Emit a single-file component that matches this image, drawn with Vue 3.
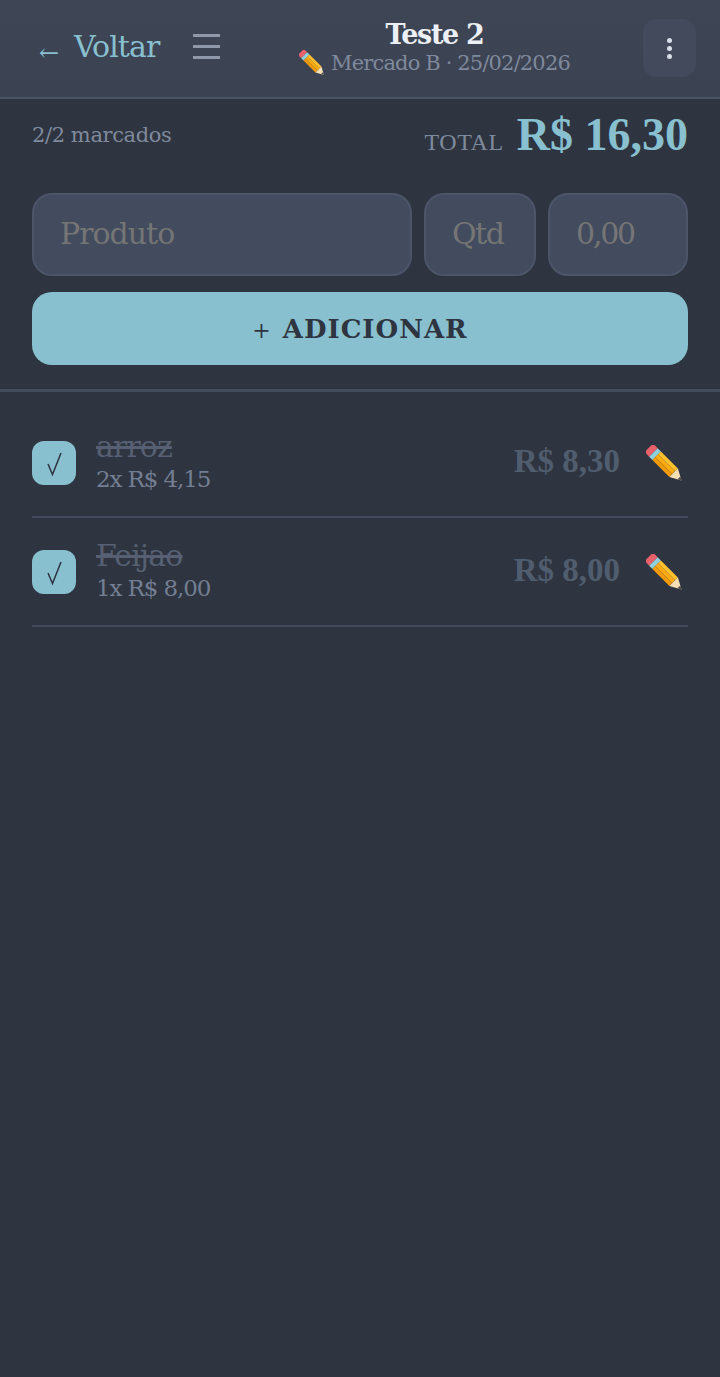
<script setup>
const items = [
  { name: 'arroz', detail: '2x R$ 4,15', price: 'R$ 8,30' },
  { name: 'Feijao', detail: '1x R$ 8,00', price: 'R$ 8,00' }
]
</script>

<template>
  <div class="page">
    <svg width="0" height="0" class="defs">
      <symbol id="pencil" viewBox="0 0 40 40">
        <g transform="rotate(45 20 20)">
          <path d="M-4 17a3.5 3.5 0 0 1 3.500-3.500H3v13H-.5A3.500 3.500 0 0 1-4 23z" fill="#e8606a" />
          <rect x="3" y="13.500" width="5" height="13" fill="#8fd0dc" />
          <rect x="8" y="13.500" width="26" height="4.400" fill="#ffc02e" />
          <rect x="8" y="17.900" width="26" height="4.300" fill="#fbab14" />
          <rect x="8" y="22.200" width="26" height="4.300" fill="#f09a0c" />
          <path d="M34 13.500 46 20 34 26.500z" fill="#f6dfb4" />
          <path d="M42 17.800 46 20 42 22.200z" fill="#4a4a4a" />
        </g>
      </symbol>
    </svg>

    <header class="topbar">
      <button class="back"><span class="arrow">←</span>Voltar</button>
      <span class="burger"><i></i><i></i><i></i></span>
      <div class="heading">
        <div class="title">Teste 2</div>
        <div class="sub">
          <svg class="sub-pencil"><use href="#pencil" /></svg>
          <span>Mercado B · 25/02/2026</span>
        </div>
      </div>
      <button class="more"><i></i><i></i><i></i></button>
    </header>

    <section class="summary">
      <span class="count">2/2 marcados</span>
      <span class="total"><span class="total-label">TOTAL</span><strong>R$ 16,30</strong></span>
    </section>

    <form class="entry" @submit.prevent>
      <div class="fields">
        <input class="field product" placeholder="Produto" />
        <input class="field qty" placeholder="Qtd" />
        <input class="field value" placeholder="0,00" />
      </div>
      <button class="add"><span class="plus">+</span>ADICIONAR</button>
    </form>

    <ul class="list">
      <li v-for="item in items" :key="item.name" class="row">
        <span class="check">
          <svg width="44" height="44" viewBox="0 0 44 44"><path d="M16 23 20.500 33.500 29 12" fill="none" stroke="#2e3440" stroke-width="1.500" /></svg>
        </span>
        <div class="info">
          <div class="name">{{ item.name }}</div>
          <div class="detail">{{ item.detail }}</div>
        </div>
        <span class="price">{{ item.price }}</span>
        <svg class="edit"><use href="#pencil" /></svg>
      </li>
    </ul>
  </div>
</template>

<style>
html, body { margin: 0; background: #2e3440; }
</style>

<style scoped>
.page {
  min-height: 1377px;
  background: #2e3440;
  font-family: "DejaVu Serif", "Liberation Serif", serif;
  box-sizing: border-box;
}
.defs { position: absolute; }
button { font-family: inherit; border: 0; background: none; padding: 0; }

.topbar {
  height: 99px;
  box-sizing: border-box;
  border-bottom: 2px solid #4c5364;
  background: linear-gradient(#3e4555, #3b4252);
  display: flex;
  align-items: center;
  padding: 0 24px 1px 37px;
}
.back {
  width: 123px;
  padding-left: 2px;
  box-sizing: border-box;
  color: #88c0d0;
  font-size: 30px;
  letter-spacing: -0.9px;
  white-space: nowrap;
  text-align: left;
  margin-bottom: 1px;
}
.arrow {
  display: inline-block;
  font-size: 24px;
  letter-spacing: 0;
  width: 35px;
  vertical-align: -4px;
}
.burger {
  width: 27px;
  margin-left: 33px;
  margin-bottom: 3px;
  display: flex;
  flex-direction: column;
  gap: 8px;
}
.burger i { height: 3px; background: #8f99aa; }
.heading {
  flex: 1;
  text-align: center;
  padding-left: 6px;
  padding-top: 2px;
}
.title {
  color: #eceff4;
  font-size: 27px;
  font-weight: 700;
  line-height: 28px;
  letter-spacing: -1.3px;
}
.sub {
  color: #7f8a9c;
  font-size: 21px;
  line-height: 28px;
  letter-spacing: -0.85px;
  display: flex;
  justify-content: center;
  align-items: center;
  gap: 6px;
}
.sub-pencil { width: 26px; height: 26px; }
.more {
  width: 53px;
  height: 58px;
  border-radius: 14px;
  background: #434a5c;
  display: flex;
  flex-direction: column;
  align-items: center;
  justify-content: center;
  gap: 3px;
}
.more i { width: 5px; height: 5px; border-radius: 50%; background: #d8dee9; }

.summary {
  display: flex;
  justify-content: space-between;
  align-items: flex-start;
  padding: 10px 32px 0;
  height: 94px;
  box-sizing: border-box;
}
.count {
  color: #7f8a9c;
  font-size: 21px;
  line-height: 52px;
  letter-spacing: -0.4px;
}
.total { display: flex; align-items: baseline; gap: 13px; line-height: 52px; }
.total-label {
  color: #7f8a9c;
  font-family: "Liberation Serif", serif;
  font-size: 24px;
  letter-spacing: 0.6px;
}
.total strong {
  color: #88c0d0;
  font-family: "Liberation Serif", serif;
  font-size: 46px;
  font-weight: 700;
}

.entry { padding: 0 32px 24px; border-bottom: 3px solid #434a5c; }
.fields { display: flex; gap: 12px; }
.field {
  height: 83px;
  box-sizing: border-box;
  min-width: 0;
  background: #434c5e;
  border: 2px solid #4c5569;
  border-radius: 20px;
  padding: 0 26px 2px;
  font-family: inherit;
  font-size: 30px;
  letter-spacing: -1.5px;
  color: #eceff4;
  outline: none;
}
.field::placeholder { color: #757575; opacity: 1; }
.product { flex: 1; letter-spacing: -1px; }
.qty { width: 112px; }
.value { width: 140px; letter-spacing: -2.2px; }
.add {
  display: block;
  width: 100%;
  height: 73px;
  margin-top: 16px;
  border-radius: 20px;
  background: #88c0d0;
  color: #2e3440;
  font-size: 26px;
  font-weight: 700;
  letter-spacing: 1px;
  text-align: center;
}
.plus { font-size: 22px; font-weight: 400; margin-right: 11px; }

.list { list-style: none; margin: 0; padding: 17px 32px 0; }
.row {
  height: 109px;
  box-sizing: border-box;
  border-bottom: 2px solid #434a5c;
  display: flex;
  align-items: center;
}
.check {
  width: 44px;
  height: 44px;
  border-radius: 12px;
  background: #88c0d0;
  display: block;
}
.check svg { display: block; }
.info { flex: 1; margin-left: 20px; padding-bottom: 1px; }
.name {
  color: #566072;
  font-size: 30px;
  line-height: 33px;
  letter-spacing: -0.9px;
  text-decoration: line-through;
}
.detail {
  color: #737e92;
  font-size: 23px;
  line-height: 32px;
  letter-spacing: -1.1px;
}
.price {
  color: #505d6e;
  font-family: "Liberation Serif", serif;
  font-size: 33px;
  font-weight: 700;
  margin-bottom: 2px;
}
.edit { width: 37px; height: 37px; margin: 2px 5px 0 26px; }
</style>
